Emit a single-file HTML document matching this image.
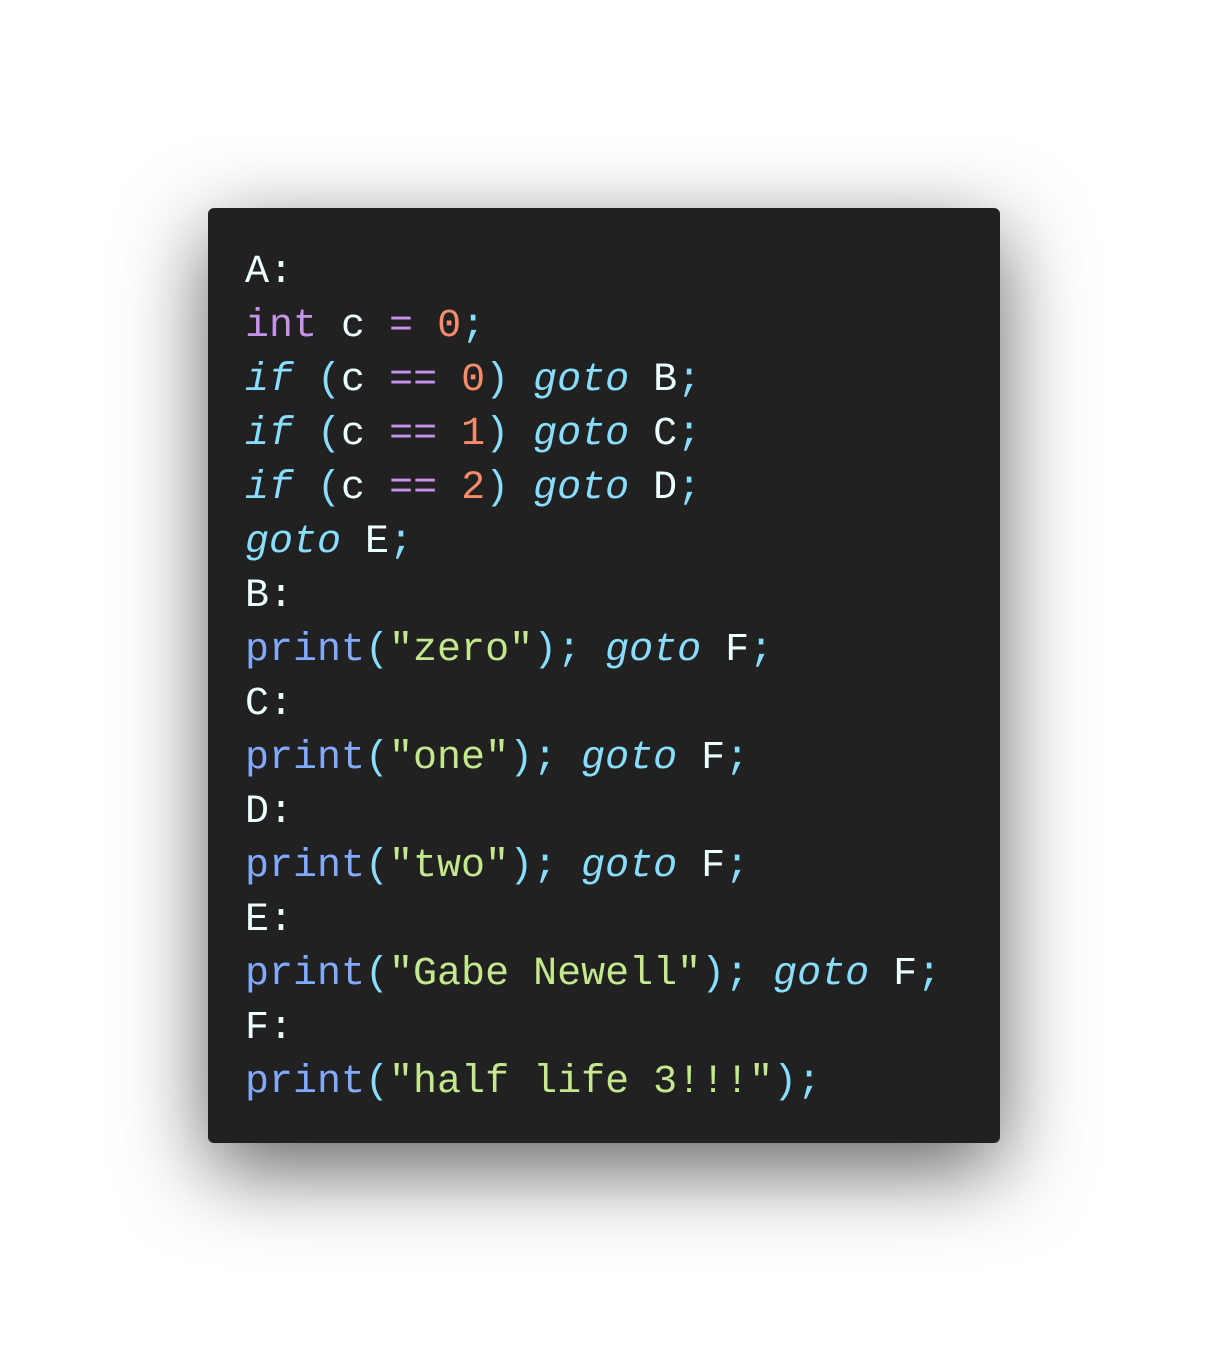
<!DOCTYPE html>
<html><head><meta charset="utf-8"><style>
html,body{margin:0;background:#fff;width:1210px;height:1352px;overflow:hidden}
.card{position:absolute;left:208px;top:208px;width:792px;height:935px;background:#212121;border-radius:6px;box-shadow:0 26px 85px rgba(0,0,0,0.62);}
pre{margin:0;position:absolute;left:245px;top:246px;font-family:"Liberation Mono",monospace;font-size:40px;line-height:54px;color:#eeffff}
.k{color:#c792ea}.o{color:#f78c6c}.c{color:#89ddff}.i{color:#89ddff;font-style:italic}.s{color:#c3e88d}.f{color:#82aaff}
</style></head><body>
<div class="card"></div>
<pre>A:
<span class="k">int</span> c <span class="k">=</span> <span class="o">0</span><span class="c">;</span>
<span class="i">if</span> <span class="c">(</span>c <span class="k">==</span> <span class="o">0</span><span class="c">)</span> <span class="i">goto</span> B<span class="c">;</span>
<span class="i">if</span> <span class="c">(</span>c <span class="k">==</span> <span class="o">1</span><span class="c">)</span> <span class="i">goto</span> C<span class="c">;</span>
<span class="i">if</span> <span class="c">(</span>c <span class="k">==</span> <span class="o">2</span><span class="c">)</span> <span class="i">goto</span> D<span class="c">;</span>
<span class="i">goto</span> E<span class="c">;</span>
B:
<span class="f">print</span><span class="c">(</span><span class="s">"zero"</span><span class="c">);</span> <span class="i">goto</span> F<span class="c">;</span>
C:
<span class="f">print</span><span class="c">(</span><span class="s">"one"</span><span class="c">);</span> <span class="i">goto</span> F<span class="c">;</span>
D:
<span class="f">print</span><span class="c">(</span><span class="s">"two"</span><span class="c">);</span> <span class="i">goto</span> F<span class="c">;</span>
E:
<span class="f">print</span><span class="c">(</span><span class="s">"Gabe Newell"</span><span class="c">);</span> <span class="i">goto</span> F<span class="c">;</span>
F:
<span class="f">print</span><span class="c">(</span><span class="s">"half life 3!!!"</span><span class="c">);</span></pre>
</body></html>
